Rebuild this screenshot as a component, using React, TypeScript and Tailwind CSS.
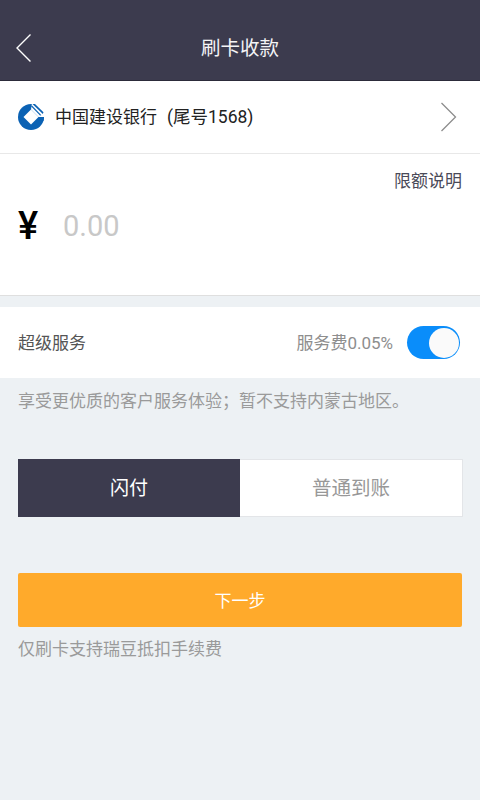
import { useState } from "react";

function BankLogo() {
  return (
    <svg width="28" height="28" viewBox="0 0 28 28" aria-hidden>
      <circle cx="14" cy="14" r="13" fill="#0b62b4" />
      <path d="M14 6.5 L21.5 14 L14 21.5 L6.5 14 Z" fill="#fff" />
      <path d="M14 6.5 L15 0 L29 0 L29 14 L21.5 14 Z" fill="#fff" />
      <path d="M15.5 1 L18 0.9 L26.5 9.2 L25.8 11 Z" fill="#0b62b4" />
      <path d="M14 3.2 L15 2.6 L24.4 12.2 L23 12.6 Z" fill="#0b62b4" />
      <path d="M21.5 14 L27 14 A13 13 0 0 1 26.4 18 L21.5 18 L23.5 16 Z" fill="#0b62b4" />
    </svg>
  );
}

export default function App() {
  const [superService, setSuperService] = useState(true);
  const [mode, setMode] = useState("flash");

  return (
    <div className="flex h-[800px] w-[480px] flex-col overflow-hidden bg-[#edf1f4] font-['Roboto','Noto_Sans_CJK_SC',sans-serif]">
      {/* header */}
      <div className="relative flex h-[81px] shrink-0 items-center justify-center border-b border-[#2c2b3a] bg-[#3c3b4e] pt-[18px]">
        <svg className="absolute left-[15px] top-[33px]" width="18" height="30" viewBox="0 0 18 30" aria-hidden>
          <path d="M15.5 1.5 L2 15 L15.5 28.5" fill="none" stroke="#fff" strokeWidth="1.4" />
        </svg>
        <span className="text-[19.5px] leading-none text-[#f4f4f6]">刷卡收款</span>
      </div>

      {/* bank */}
      <div className="flex h-[73px] shrink-0 items-center border-b border-[#e8e8e8] bg-white pl-[17px] pr-[22px]">
        <BankLogo />
        <span className="ml-[10px] pt-[2px] text-[17px] leading-none text-[#222]">
          中国建设银行<span className="ml-[10px] text-[17.5px]">(尾号1568)</span>
        </span>
        <svg className="ml-auto -translate-x-[1px]" width="17" height="30" viewBox="0 0 17 30" aria-hidden>
          <path d="M1.5 1 L15.5 15 L1.5 29" fill="none" stroke="#8d8d8d" strokeWidth="1.3" />
        </svg>
      </div>

      {/* amount */}
      <div className="flex h-[142px] shrink-0 flex-col border-b border-[#dfdfdf] bg-white px-[18px]">
        <div className="mt-[19px] self-end text-[17px] leading-none text-[#4a4a58]">限额说明</div>
        <div className="mt-[14px] flex items-center">
          <span className="w-[45px] text-[38px] font-medium leading-[44px] text-black">¥</span>
          <span className="text-[29px] leading-[44px] text-[#c8c8c8]">0.00</span>
        </div>
      </div>

      {/* super service */}
      <div className="mt-[11px] flex h-[71px] shrink-0 items-center bg-white pl-[18px] pr-[20px]">
        <span className="pt-[2px] text-[17px] leading-none text-[#555]">超级服务</span>
        <span className="ml-auto pt-[2px] text-[17px] leading-none text-[#8e8e8e]">服务费0.05%</span>
        <button
          type="button"
          onClick={() => setSuperService(!superService)}
          className="ml-[14px] flex h-[33px] w-[53px] items-center justify-end rounded-full bg-[#0a8dfa] pr-[1px]"
        >
          <span className="h-[30px] w-[30px] rounded-full bg-[#fafafa]" />
        </button>
      </div>

      <div className="mt-[14px] px-[18px] text-[17px] leading-[18px] text-[#9a9a9a]">享受更优质的客户服务体验；暂不支持内蒙古地区。</div>

      {/* arrival mode */}
      <div className="ml-[18px] mr-[17px] mt-[49px] flex h-[58px] shrink-0">
        <button
          type="button"
          onClick={() => setMode("flash")}
          className="w-[222px] bg-[#3c3b4e] pt-[2px] text-[19px] text-white"
        >
          闪付
        </button>
        <button
          type="button"
          onClick={() => setMode("normal")}
          className="w-[223px] border border-l-0 border-[#e3e5e8] bg-white pt-[2px] text-[19.5px] text-[#989898]"
        >
          普通到账
        </button>
      </div>

      <button
        type="button"
        className="mx-[18px] mt-[56px] h-[54px] shrink-0 rounded-[2px] bg-[#ffaa2b] pt-[3px] text-[17px] text-white"
      >
        下一步
      </button>
      <div className="mx-[18px] mt-[13px] text-[17px] leading-[18px] text-[#9a9a9a]">仅刷卡支持瑞豆抵扣手续费</div>
      <span className="hidden">{mode}</span>
    </div>
  );
}
